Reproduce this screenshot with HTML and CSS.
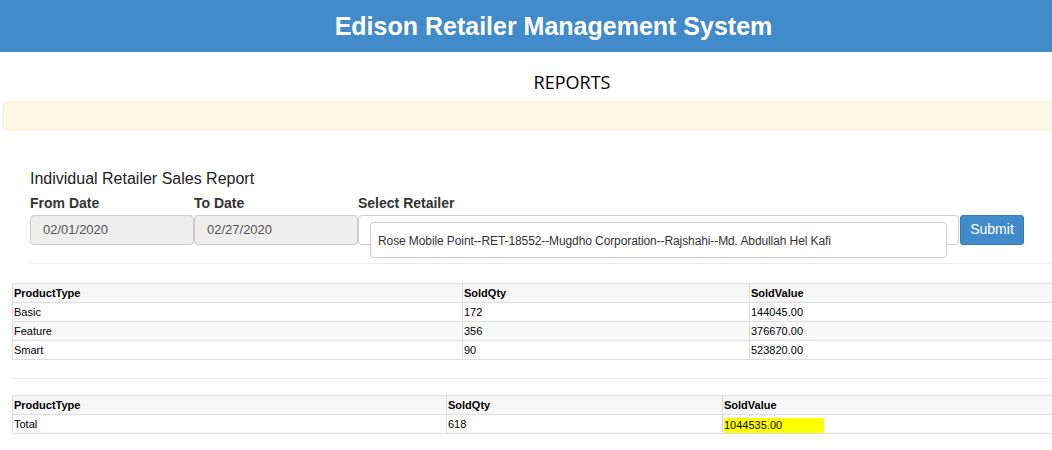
FILE: index.html
```html
<!DOCTYPE html>
<html>
<head>
<meta charset="utf-8">
<link rel="stylesheet" href="styles.css">
</head>
<body>
<header class="topbar"><h1 class="brand">Edison Retailer Management System</h1></header>
<div class="page-title">REPORTS</div>
<div class="alert"></div>

<section class="filter">
  <h2 class="report-title">Individual Retailer Sales Report</h2>
  <div class="form-row">
    <div class="field date">
      <label class="lbl">From Date</label>
      <div class="ctrl readonly">02/01/2020</div>
    </div>
    <div class="field date">
      <label class="lbl">To Date</label>
      <div class="ctrl readonly">02/27/2020</div>
    </div>
    <div class="field retailer">
      <label class="lbl">Select Retailer</label>
      <div class="ctrl outer">
        <div class="select">Rose Mobile Point--RET-18552--Mugdho Corporation--Rajshahi--Md. Abdullah Hel Kafi</div>
      </div>
    </div>
    <div class="field action">
      <button class="btn">Submit</button>
    </div>
  </div>
  <hr class="rule">
</section>

<table class="grid g1">
  <colgroup><col class="c1"><col class="c2"><col></colgroup>
  <tr class="head"><th>ProductType</th><th>SoldQty</th><th>SoldValue</th></tr>
  <tr><td>Basic</td><td>172</td><td>144045.00</td></tr>
  <tr class="alt"><td>Feature</td><td>356</td><td>376670.00</td></tr>
  <tr><td>Smart</td><td>90</td><td>523820.00</td></tr>
</table>

<hr class="rule rule2">

<table class="grid g2">
  <colgroup><col class="c1"><col class="c2"><col></colgroup>
  <tr class="head"><th>ProductType</th><th>SoldQty</th><th>SoldValue</th></tr>
  <tr><td>Total</td><td>618</td><td><span class="hl">1044535.00</span></td></tr>
</table>
</body>
</html>
```

FILE: styles.css
```css
html, body {
  margin: 0;
  padding: 0;
  background: #fff;
  overflow: hidden;
}
body {
  font-family: "Liberation Sans", Arial, sans-serif;
  color: #333;
}
.topbar {
  background: #428bca;
  height: 52px;
  display: flex;
  align-items: center;
  justify-content: center;
  padding-left: 55px;
}
.brand {
  margin: 0;
  color: #fff;
  font-family: "Liberation Sans", Arial, sans-serif;
  font-weight: bold;
  font-size: 25px;
  line-height: 52px;
}
.page-title {
  font-family: "Open Sans", sans-serif;
  font-size: 18px;
  color: #000;
  text-align: center;
  padding-left: 92px;
  margin-top: 17px;
  height: 26px;
  line-height: 26px;
}
.alert {
  margin: 7px 0 0 3px;
  height: 26px;
  background: #fcf8e3;
  border: 1px solid #faebcc;
  border-right: none;
  border-radius: 4px 0 0 4px;
}
.filter {
  padding-left: 30px;
  margin-top: 39px;
}
.report-title {
  margin: 0;
  font-size: 16px;
  font-weight: normal;
  color: #222;
  line-height: 20px;
}
.form-row {
  display: flex;
  margin-top: 6px;
}
.field {
  display: flex;
  flex-direction: column;
}
.date { width: 164px; }
.retailer { width: 601px; }
.lbl {
  font-weight: bold;
  font-size: 14px;
  color: #333;
  line-height: 17px;
  height: 17px;
  margin-bottom: 3px;
}
.ctrl {
  box-sizing: border-box;
  height: 30px;
  border: 1px solid #ccc;
  border-radius: 4px;
  font-size: 13px;
  color: #555;
}
.readonly {
  width: 164px;
  background: #eee;
  padding: 6px 12px 0;
  line-height: 16px;
}
.outer {
  width: 601px;
  padding: 6px 11px 0 11px;
  background: #fff;
}
.select {
  box-sizing: border-box;
  height: 36px;
  border: 1px solid #ccc;
  border-radius: 4px;
  background: #fff;
  padding: 10px 7px 0;
  font-size: 12px;
  letter-spacing: -0.1px;
  color: #333;
  line-height: 16px;
  white-space: nowrap;
}
.action {
  justify-content: flex-end;
  padding-left: 1px;
}
.btn {
  box-sizing: border-box;
  width: 64px;
  height: 30px;
  background: #428bca;
  border: 1px solid #357ebd;
  border-radius: 3px;
  color: #fff;
  font-family: "Liberation Sans", Arial, sans-serif;
  font-size: 14px;
  padding: 0 0 2px;
}
.rule {
  border: none;
  border-top: 1px solid #eee;
  margin: 18px 0 0;
  height: 0;
}
.rule2 {
  margin: 18px 0 0 12px;
}
.grid {
  border-collapse: collapse;
  table-layout: fixed;
  width: 1042px;
  margin-left: 12px;
  font-family: "Liberation Sans", Tahoma, sans-serif;
  font-size: 11px;
  color: #000;
}
.g1 { margin-top: 19px; }
.g2 { margin-top: 16px; }
.g1 .c1 { width: 450px; }
.g1 .c2 { width: 287px; }
.g2 .c1 { width: 434px; }
.g2 .c2 { width: 276px; }
.grid th, .grid td {
  border: 1px solid #ddd;
  border-right: none;
  text-align: left;
  padding: 0 1px;
  height: 18px;
  line-height: 18px;
  white-space: nowrap;
  overflow: hidden;
}
.grid th { font-weight: bold; }
.grid tr.head { background: #f7f7f7; }
.grid tr.alt { background: #f9f9f9; }
.hl {
  display: inline-block;
  width: 100px;
  height: 15px;
  background: #ff0;
  line-height: 15px;
  vertical-align: middle;
}
```
